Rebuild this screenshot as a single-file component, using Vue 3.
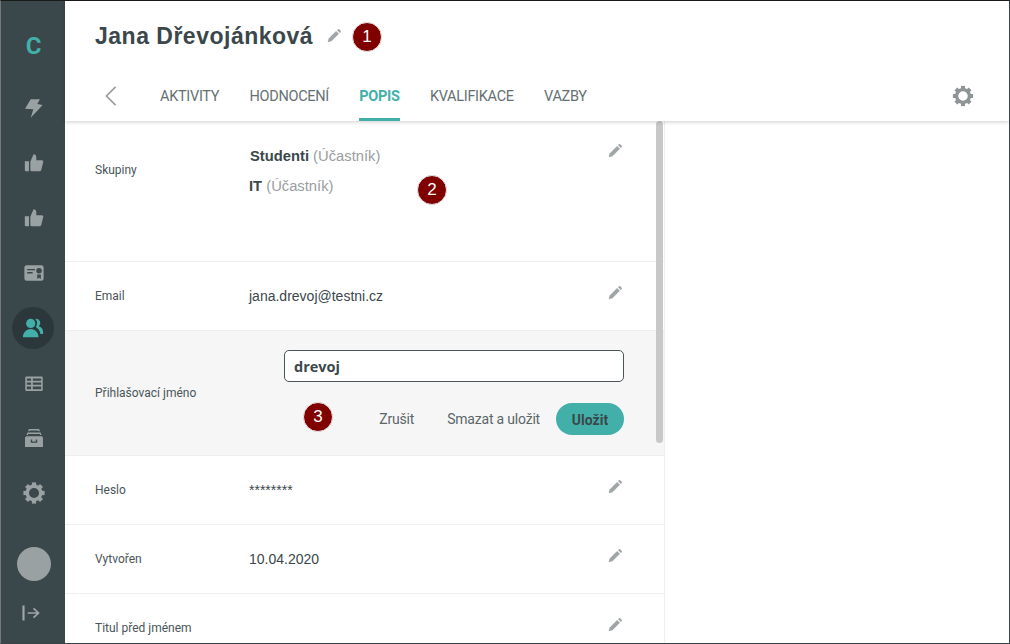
<script setup>
const tabs = [
  { label: 'Aktivity' },
  { label: 'Hodnocení' },
  { label: 'Popis', active: true },
  { label: 'Kvalifikace' },
  { label: 'Vazby' },
]
const pencilBody = 'M2.500 21.500 4 15.800 15.200 4.600 19.400 8.800 8.200 20z'
const pencilTop = 'M16.600 3.200 17.800 2a1.500 1.500 0 0 1 2.100 0l2.100 2.100a1.500 1.500 0 0 1 0 2.100l-1.200 1.200z'
const thumb = 'M2 10h4.500v11H3a1 1 0 0 1-1-1v-10zM8 10.500 11.500 2.500c1.800 0 3 1.200 3 3.200V9h5.800a1.800 1.800 0 0 1 1.700 2.300l-2.100 8.300A1.900 1.900 0 0 1 18.100 21H9.500A1.500 1.500 0 0 1 8 19.500v-9z'
const teeth = [0, 45, 90, 135, 180, 225, 270, 315]
</script>

<template>
  <div class="app">
    <aside class="sidebar">
      <div class="logo">C</div>
      <nav class="nav">
        <svg class="ni" viewBox="0 0 24 24"><path d="M8.400 2.500H18.500L15.600 7.600 21.500 8.700 8.400 22.600 11.200 13.400 2.200 12.800z" /></svg>
        <svg class="ni" viewBox="0 0 24 24"><path :d="thumb" /></svg>
        <svg class="ni" viewBox="0 0 24 24"><path :d="thumb" /></svg>
        <svg class="ni" viewBox="0 0 24 24">
          <path fill-rule="evenodd" d="M4 3.500h16a2.500 2.500 0 0 1 2.500 2.500v12a2.500 2.500 0 0 1-2.500 2.500H4A2.500 2.500 0 0 1 1.500 18V6A2.500 2.500 0 0 1 4 3.500zM4.500 7.500v1.500h8.500V7.500zM4.500 11v1.500h6V11zM17.500 6.500a3 3 0 1 0 0 6 3 3 0 0 0 0-6zM15.500 13.500v5l2-1.200 2 1.200v-5z" />
        </svg>
        <div class="ni-active">
          <svg class="ni teal" viewBox="0 0 24 24">
            <path d="M15.500 2a4.500 4.500 0 0 1 2.800 8c2.700.7 4.700 3 4.700 6v2.500h-3c-.3-3.500-2.300-6.200-5-7.600a6.500 6.500 0 0 0-.5-8.800z" />
            <circle cx="9.500" cy="7" r="5" />
            <path d="M1 22c0-5 3.500-9 8.500-9s8.500 4 8.500 9z" />
          </svg>
        </div>
        <svg class="ni" viewBox="0 0 24 24">
          <path fill-rule="evenodd" d="M3.800 4.800h16.400a1.300 1.300 0 0 1 1.300 1.300v13.300a1.300 1.300 0 0 1-1.300 1.300H3.800a1.300 1.300 0 0 1-1.300-1.300V6.100a1.300 1.300 0 0 1 1.300-1.300zM4.200 7v2.600h4.600V7zM10.700 7v2.600h9.100V7zM4.200 11.400V14h4.600v-2.600zM10.700 11.400V14h9.100v-2.600zM4.200 15.800v3h4.600v-3zM10.700 15.800v3h9.100v-3z" />
        </svg>
        <svg class="ni" viewBox="0 0 24 24">
          <path fill-rule="evenodd" d="M6.500 2.200h11l1 2.300h-1.500l-.3-.8H7.300l-.3.800H5.500zM4.800 6h14.400l1 2.800H18.600l-.3-1.300H5.700l-.3 1.300H3.800zM2.200 11.500 3.500 10h17l1.300 1.500v10.300H2.200zM8.500 13.500v3.800h7v-3.800h-1.500v2.300h-4v-2.300z" />
        </svg>
        <svg class="ni cog" viewBox="0 0 24 24">
          <circle cx="12" cy="12" r="7" fill="none" stroke="#9aa1a3" stroke-width="3.600" />
          <rect v-for="a in teeth" :key="a" x="9.800" y="1" width="4.400" height="4" :transform="`rotate(${a} 12 12)`" />
        </svg>
      </nav>
      <div class="bottom">
        <div class="avatar"></div>
        <svg class="logout" viewBox="0 0 24 24" fill="none" stroke="#a0a7a9" stroke-width="2">
          <path d="M3 3v18" stroke-width="2.600" />
          <path d="M8 12h13M15 6.500l6 5.500-6 5.500" />
        </svg>
      </div>
    </aside>

    <main class="main">
      <header class="header">
        <div class="title-row">
          <h1>Jana Dřevojánková</h1>
          <svg class="pencil title-pencil" viewBox="0 0 24 24"><path :d="pencilBody" /><path :d="pencilTop" /></svg>
          <span class="badge badge-title">1</span>
        </div>
        <div class="tabs-row">
          <svg class="back" viewBox="0 0 14 24" fill="none" stroke="#9a9ea0" stroke-width="1.800"><path d="M12 2 2 12l10 10" /></svg>
          <div class="tabs">
            <a v-for="t in tabs" :key="t.label" class="tab" :class="{ active: t.active }">{{ t.label }}</a>
          </div>
          <svg class="gear" viewBox="0 0 24 24">
            <circle cx="12" cy="12" r="7" fill="none" stroke="#8f9597" stroke-width="3.600" />
            <rect v-for="a in teeth" :key="a" x="9.800" y="1" width="4.400" height="4" :transform="`rotate(${a} 12 12)`" />
          </svg>
        </div>
      </header>

      <div class="body">
        <section class="panel">
          <div class="row row-groups">
            <div class="label">Skupiny</div>
            <div class="value groups">
              <div class="group-first"><b>Studenti</b> <span class="muted">(Účastník)</span></div>
              <div><b>IT</b> <span class="muted">(Účastník)</span></div>
              <span class="badge badge-groups">2</span>
            </div>
            <svg class="pencil" viewBox="0 0 24 24"><path :d="pencilBody" /><path :d="pencilTop" /></svg>
          </div>
          <div class="row row-std">
            <div class="label">Email</div>
            <div class="value">jana.drevoj@testni.cz</div>
            <svg class="pencil" viewBox="0 0 24 24"><path :d="pencilBody" /><path :d="pencilTop" /></svg>
          </div>
          <div class="row row-edit">
            <div class="label">Přihlašovací jméno</div>
            <div class="editor">
              <input class="input" value="drevoj" />
              <div class="actions">
                <span class="badge badge-actions">3</span>
                <span class="link">Zrušit</span>
                <span class="link">Smazat a uložit</span>
                <button class="save">Uložit</button>
              </div>
            </div>
          </div>
          <div class="row row-std">
            <div class="label">Heslo</div>
            <div class="value stars">********</div>
            <svg class="pencil" viewBox="0 0 24 24"><path :d="pencilBody" /><path :d="pencilTop" /></svg>
          </div>
          <div class="row row-std">
            <div class="label">Vytvořen</div>
            <div class="value">10.04.2020</div>
            <svg class="pencil" viewBox="0 0 24 24"><path :d="pencilBody" /><path :d="pencilTop" /></svg>
          </div>
          <div class="row row-std">
            <div class="label">Titul před jménem</div>
            <div class="value"></div>
            <svg class="pencil" viewBox="0 0 24 24"><path :d="pencilBody" /><path :d="pencilTop" /></svg>
          </div>
          <div class="scrollbar"></div>
        </section>
      </div>
    </main>
  </div>
</template>

<style>
html, body { margin: 0; background: #fff; overflow: hidden; }
</style>

<style scoped>
.app {
  width: 1010px;
  height: 644px;
  box-sizing: border-box;
  display: flex;
  overflow: hidden;
  border-top: 1px solid #1a1a1a;
  border-right: 1px solid #3a4448;
  border-bottom: 1px solid #3a4448;
  border-left: 1px solid #777;
  font-family: "Liberation Sans", Arial, sans-serif;
  color: #3a474b;
  background: #fff;
}
.sidebar {
  width: 64px;
  flex: none;
  box-sizing: border-box;
  padding-left: 1px;
  background: #3a474b;
  display: flex;
  flex-direction: column;
  align-items: center;
}
.logo {
  margin-top: 30px;
  height: 30px;
  color: #42b0a9;
  font: 700 24px/30px Roboto, sans-serif;
}
.nav {
  margin-top: 36px;
  display: flex;
  flex-direction: column;
  align-items: center;
  gap: 33px;
}
.ni { width: 22px; height: 22px; fill: #9aa1a3; display: block; }
.ni.teal { fill: #42b0a9; }
.ni.cog { transform: scale(1.050); }
.ni-active {
  width: 42px;
  height: 42px;
  margin: -10px 0 -10px -1px;
  border-radius: 50%;
  background: #2b373a;
  display: flex;
  align-items: center;
  justify-content: center;
}
.bottom {
  margin-top: auto;
  display: flex;
  flex-direction: column;
  align-items: center;
}
.avatar { width: 34px; height: 34px; border-radius: 50%; background: #9aa1a3; }
.logout { width: 20px; height: 20px; margin: 22px 5px 20px 0; }

.main { flex: 1; min-width: 0; display: flex; flex-direction: column; }
.header {
  height: 120px;
  flex: none;
  box-sizing: border-box;
  position: relative;
  z-index: 2;
  background: #fff;
  box-shadow: 0 1px 4px rgba(0, 0, 0, 0.2);
}
.title-row {
  height: 69px;
  padding-left: 30px;
  display: flex;
  align-items: center;
  position: relative;
}
h1 {
  margin: 0;
  font: 700 23px/30px "Liberation Sans", Arial, sans-serif;
  letter-spacing: 0.500px;
  color: #3a474b;
}
.pencil { width: 16px; height: 16px; fill: #a0a5a7; flex: none; }
.title-pencil { margin-left: 13px; }
.tabs-row {
  height: 51px;
  display: flex;
  align-items: stretch;
  position: relative;
}
.back { width: 14px; height: 22px; margin: 15px 0 0 39px; }
.tabs { display: flex; gap: 30.300px; margin-left: 42px; }
.tab {
  font: 400 14.500px/53px Roboto, sans-serif;
  letter-spacing: -0.300px;
  text-transform: uppercase;
  color: #667073;
  box-sizing: border-box;
  height: 51px;
}
.tab.active {
  color: #42b0a9;
  font-weight: 700;
  border-bottom: 3px solid #42b0a9;
}
.gear { width: 22px; height: 22px; fill: #8f9597; margin: 15px 35px 0 auto; }

.body { flex: 1; min-height: 0; display: flex; }
.panel {
  width: 600px;
  flex: none;
  box-sizing: border-box;
  border-right: 1px solid #eee;
  position: relative;
  overflow: hidden;
}
.row {
  box-sizing: border-box;
  display: flex;
  padding-left: 30px;
  border-bottom: 1px solid #eeeeee;
  position: relative;
}
.row-groups { height: 141px; padding-top: 41px; }
.row-std { height: 69px; align-items: center; }
.row-edit { height: 125px; align-items: center; background: #f6f6f6; }
.label { width: 154px; flex: none; font: 400 12px/16px Roboto, sans-serif; color: #4a5558; }
.value { flex: 1; font-size: 14px; line-height: 18px; color: #3a474b; }
.groups { display: flex; flex-direction: column; gap: 12px; margin-top: -15px; position: relative; font-size: 14.750px; }
.group-first { padding-left: 1px; }
.muted { color: #9a9ea0; }
.row .pencil { margin-right: 41px; position: relative; top: -3px; }
.row-groups .pencil { top: -19px; }
.editor { margin-left: 35px; width: 340px; }
.input {
  display: block;
  box-sizing: border-box;
  width: 340px;
  height: 32px;
  border: 1px solid #4a5558;
  border-radius: 5px;
  padding: 0 9px;
  font: 700 14.500px "Open Sans", sans-serif;
  color: #3a474b;
  background: #fff;
  outline: none;
}
.actions {
  display: flex;
  justify-content: flex-end;
  align-items: center;
  margin-top: 20px;
  gap: 33px;
  position: relative;
}
.link { font: 400 14px/34px Roboto, sans-serif; color: #5c6669; letter-spacing: -0.200px; }
.save {
  width: 68px;
  height: 32px;
  margin-left: -17px;
  padding: 1px 0 0;
  border: 0;
  border-radius: 16px;
  background: #42b0a9;
  color: #3a474b;
  font: 700 14px Roboto, sans-serif;
}
.scrollbar {
  position: absolute;
  right: 1px;
  top: 0;
  width: 7px;
  height: 322px;
  border-radius: 4px;
  background: #c8c8c8;
}
.badge {
  position: absolute;
  width: 28px;
  height: 28px;
  border-radius: 50%;
  border: 1px solid #e6e6e6;
  box-sizing: content-box;
  background: #800000;
  color: #fff;
  font: 400 17px/28px "Liberation Sans", Arial, sans-serif;
  text-align: center;
}
.badge-title { left: 287px; top: 21px; }
.badge-groups { left: 168px; top: 28px; }
.badge-actions { left: 19px; top: 0; }
</style>
